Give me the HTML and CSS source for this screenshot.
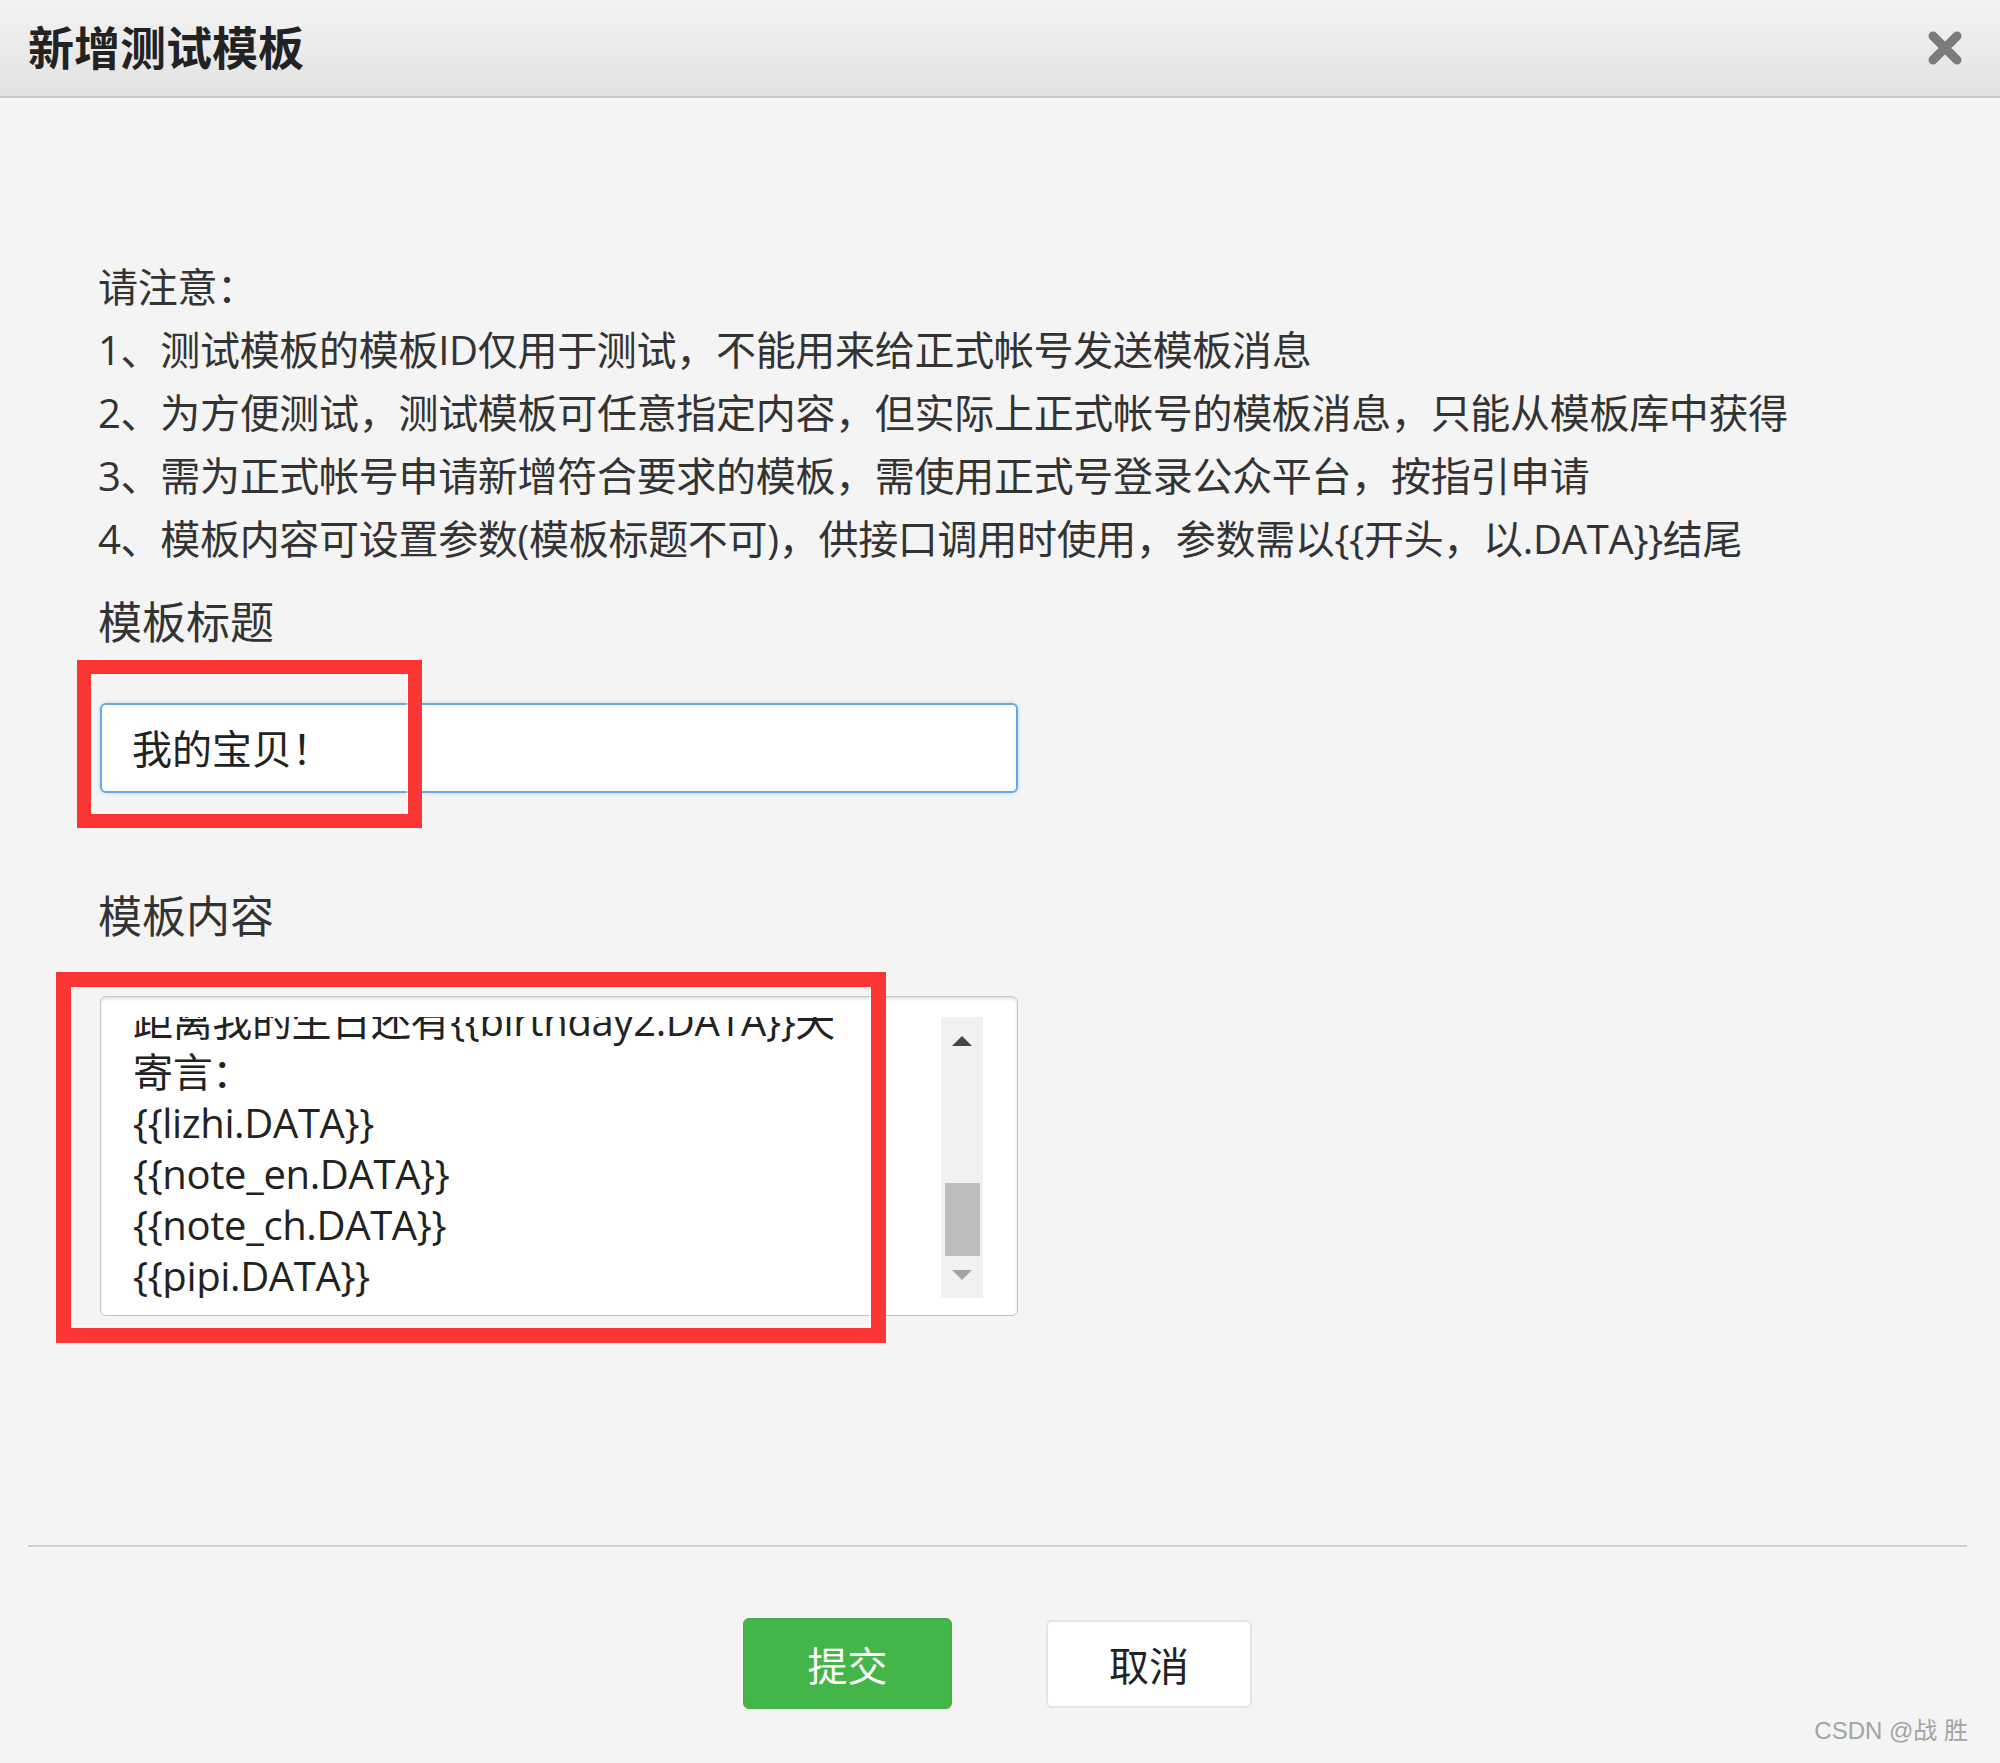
FILE: index.html
```html
<!DOCTYPE html>
<html lang="zh-CN">
<head>
<meta charset="utf-8">
<title>新增测试模板</title>
<link rel="stylesheet" href="styles.css">
</head>
<body>
<div class="dialog">
  <div class="hd">
    <h3 class="title">新增测试模板</h3>
    <span class="close">
      <svg width="40" height="40" viewBox="0 0 40 40"><path d="M8 8 L32 32 M32 8 L8 32" stroke="#7b7b7b" stroke-width="9" stroke-linecap="round" fill="none"/></svg>
    </span>
  </div>
  <div class="bd">
    <div class="notes">
      <p>请注意：</p>
      <p>1、测试模板的模板ID仅用于测试，不能用来给正式帐号发送模板消息</p>
      <p>2、为方便测试，测试模板可任意指定内容，但实际上正式帐号的模板消息，只能从模板库中获得</p>
      <p>3、需为正式帐号申请新增符合要求的模板，需使用正式号登录公众平台，按指引申请</p>
      <p>4、模板内容可设置参数(模板标题不可)，供接口调用时使用，参数需以{{开头，以.DATA}}结尾</p>
    </div>
    <div class="label">模板标题</div>
    <div class="field">
      <div class="input">我的宝贝！</div>
      <span class="mark mark-title"></span>
    </div>
    <div class="label label-content">模板内容</div>
    <div class="field field-ta">
      <div class="ta">
        <div class="ta-view">
          <div class="ta-lines">
            <p>距离我的生日还有{{birthday2.DATA}}天</p>
            <p>寄言：</p>
            <p>{{lizhi.DATA}}</p>
            <p>{{note_en.DATA}}</p>
            <p>{{note_ch.DATA}}</p>
            <p>{{pipi.DATA}}</p>
          </div>
        </div>
        <div class="sb">
          <span class="sb-up"></span>
          <span class="sb-thumb"></span>
          <span class="sb-down"></span>
        </div>
      </div>
      <span class="mark mark-content"></span>
    </div>
  </div>
  <div class="ft">
    <div class="btns">
      <button class="btn btn-primary" type="button">提交</button>
      <button class="btn btn-default" type="button">取消</button>
    </div>
  </div>
  <div class="watermark">CSDN @战 胜</div>
</div>
</body>
</html>
```

FILE: styles.css
```css
html, body {
  margin: 0;
  padding: 0;
}
body {
  background: #f4f4f4;
  font-family: "Open Sans", "Noto Sans CJK SC", sans-serif;
  color: #333;
}
.dialog {
  position: relative;
  width: 2000px;
  height: 1763px;
  background: #f4f4f4;
  overflow: hidden;
}
.hd {
  box-sizing: border-box;
  height: 98px;
  display: flex;
  align-items: center;
  justify-content: space-between;
  padding: 0 35px 0 28px;
  background: linear-gradient(#f3f3f3, #e2e2e2);
  border-bottom: 2px solid #c9c9c9;
}
.title {
  margin: 0 0 6px 0;
  font-family: "Noto Sans CJK SC", sans-serif;
  font-size: 46px;
  font-weight: 700;
  line-height: 1;
  color: #222;
}
.close {
  display: flex;
  width: 40px;
  height: 40px;
}
.bd {
  padding: 157px 0 0 100px;
}
.notes {
  margin-left: -2px;
}
.notes p {
  margin: 0;
  font-size: 40px;
  line-height: 63px;
  letter-spacing: -0.3px;
  color: #333;
}
.label {
  margin: 20px 0 0 -2px;
  font-size: 44px;
  line-height: 64px;
  color: #333;
}
.label-content {
  margin-top: 91px;
}
.field {
  position: relative;
  width: 918px;
  margin-top: 49px;
}
.field-ta {
  margin-top: 48px;
}
.input {
  box-sizing: border-box;
  width: 918px;
  height: 90px;
  padding: 2px 0 0 30px;
  background: #fff;
  border: 2px solid #66a7e8;
  border-radius: 6px;
  box-shadow: 0 0 4px rgba(102, 167, 232, 0.35);
  font-size: 40px;
  line-height: 84px;
  color: #222;
}
.ta {
  box-sizing: border-box;
  width: 918px;
  height: 320px;
  display: flex;
  padding: 20px 34px 17px 32px;
  background: #fff;
  border: 1px solid #c4c4c4;
  border-radius: 6px;
  box-shadow: inset 0 2px 3px rgba(0, 0, 0, 0.12);
}
.ta-view {
  flex: 1;
  overflow: hidden;
  display: flex;
  flex-direction: column;
  justify-content: flex-end;
}
.ta-lines {
  flex-shrink: 0;
  margin-bottom: -3px;
}
.ta-lines p {
  margin: 0;
  font-size: 40px;
  line-height: 51px;
  letter-spacing: -0.35px;
  color: #222;
  white-space: nowrap;
}
.sb {
  width: 42px;
  display: flex;
  flex-direction: column;
  align-items: center;
  background: #f1f1f1;
}
.sb-up {
  margin-top: 19px;
  width: 0;
  height: 0;
  border-left: 10px solid transparent;
  border-right: 10px solid transparent;
  border-bottom: 10px solid #454545;
}
.sb-thumb {
  margin-top: 137px;
  width: 35px;
  height: 73px;
  background: #bdbdbd;
}
.sb-down {
  margin-top: 14px;
  width: 0;
  height: 0;
  border-left: 10px solid transparent;
  border-right: 10px solid transparent;
  border-top: 10px solid #a3a3a3;
}
.mark {
  position: absolute;
  box-sizing: border-box;
  border: 14px solid #fc3535;
  box-shadow: inset 0 0 0 2px rgba(255, 255, 255, 0.45);
  pointer-events: none;
}
.mark-title {
  left: -23px;
  top: -43px;
  width: 345px;
  height: 168px;
}
.mark-content {
  left: -44px;
  top: -24px;
  width: 830px;
  height: 371px;
  border-width: 15px;
}
.ft {
  margin: 229px 33px 0 28px;
  padding-top: 71px;
  border-top: 2px solid #cfcfcf;
  box-shadow: inset 0 1px 0 #fafafa;
}
.btns {
  display: flex;
  justify-content: center;
  align-items: center;
  gap: 94px;
}
.btn {
  box-sizing: border-box;
  font-family: "Noto Sans CJK SC", sans-serif;
  font-size: 40px;
  line-height: 1;
  border-radius: 6px;
  padding: 0;
  cursor: pointer;
}
.btn-primary {
  width: 209px;
  height: 91px;
  background: #44b549;
  border: 1px solid #3fae45;
  color: #fff;
}
.btn-default {
  width: 206px;
  height: 88px;
  background: #fff;
  border: 2px solid #e4e4ea;
  color: #222;
}
.watermark {
  position: absolute;
  right: 32px;
  top: 1716px;
  font-family: "Liberation Sans", "Noto Sans CJK SC", sans-serif;
  font-size: 24px;
  line-height: 30px;
  color: #a3a3a3;
}
```
